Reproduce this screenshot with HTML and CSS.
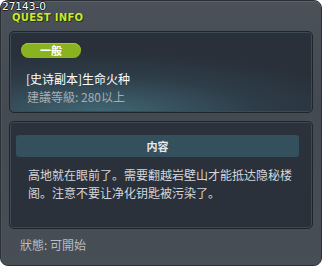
FILE: index.html
```html
<!DOCTYPE html>
<html>
<head>
<meta charset="utf-8">
<link rel="stylesheet" href="styles.css">
</head>
<body>
<div class="window">
  <div class="qid">27143-0</div>
  <div class="title">QUEST INFO</div>
  <div class="panel summary">
    <div class="badge">一般</div>
    <div class="qname">[史诗副本]生命火种</div>
    <div class="qlevel">建議等級: 280以上</div>
  </div>
  <div class="panel content">
    <div class="content-head">内容</div>
    <div class="content-text">高地就在眼前了。需要翻越岩壁山才能抵达隐秘楼阁。注意不要让净化钥匙被污染了。</div>
  </div>
  <div class="status">狀態: 可開始</div>
</div>
</body>
</html>
```

FILE: styles.css
```css
* { box-sizing: border-box; }
html, body { margin: 0; padding: 0; background: #ffffff; }
body { font-family: "Noto Sans CJK SC", "DejaVu Sans", sans-serif; }

.window {
  position: relative;
  width: 322px;
  height: 266px;
  background: linear-gradient(#4a5159, #434a52 40%, #474e56);
  border: 1px solid #2b3036;
  border-radius: 8px;
  box-shadow: inset 0 1px 0 #5b636b, inset 1px 0 0 #4f565e;
  padding: 0 8px 0 8px;
  display: flex;
  flex-direction: column;
}

.qid {
  position: absolute;
  left: 1px;
  top: 0px;
  font-family: "DejaVu Sans", sans-serif;
  font-size: 10.5px;
  line-height: 11px;
  color: #ffffff;
  text-shadow: 1px 0 0 #1d2126, -1px 0 0 #1d2126, 0 1px 0 #1d2126, 0 -1px 0 #1d2126;
}

.title {
  height: 30px;
  padding: 11px 0 0 3px;
  font-family: "DejaVu Sans", sans-serif;
  font-weight: bold;
  font-size: 10px;
  line-height: 12px;
  color: #c9ea2c;
  text-shadow: 1px 1px 0 #2a2f22, -1px 0 0 #2f3526;
  letter-spacing: 0.3px;
}

.panel {
  border: 1px solid #1f252c;
  border-radius: 5px;
  box-shadow: inset 0 0 0 1px #3d4a55;
}

.summary {
  height: 82px;
  padding: 11px 0 0 11px;
  background:
    radial-gradient(ellipse 260px 60px at 30% 100%, rgba(72,120,135,0.75), rgba(60,100,115,0.25) 60%, rgba(42,48,58,0) 100%),
    #29303a;
}

.badge {
  width: 60px;
  height: 15px;
  border-radius: 8px;
  background: #8ab41f;
  box-shadow: inset 0 1px 0 #a3cc34;
  color: #ffffff;
  font-weight: bold;
  font-size: 11px;
  line-height: 15px;
  text-align: center;
}

.qname {
  margin: 13px 0 0 5px;
  font-size: 12px;
  line-height: 16px;
  color: #ffffff;
}

.qlevel {
  margin: 2px 0 0 6px;
  font-size: 12px;
  line-height: 16px;
  color: #a5adb5;
}

.content {
  margin-top: 8px;
  height: 108px;
  padding: 13px 13px 0 6px;
  background: linear-gradient(#2b323c, #2a303a);
}

.content-head {
  height: 22px;
  border-radius: 3px;
  background: #34505d;
  color: #e6eaee;
  font-weight: bold;
  font-size: 11px;
  line-height: 22px;
  text-align: center;
}

.content-text {
  margin-top: 9px;
  padding: 0 0 0 12px;
  font-size: 12px;
  line-height: 18px;
  color: #d3d7dc;
}

.status {
  padding: 8px 0 0 11px;
  font-size: 12px;
  line-height: 16px;
  color: #b7bdc3;
}
```
